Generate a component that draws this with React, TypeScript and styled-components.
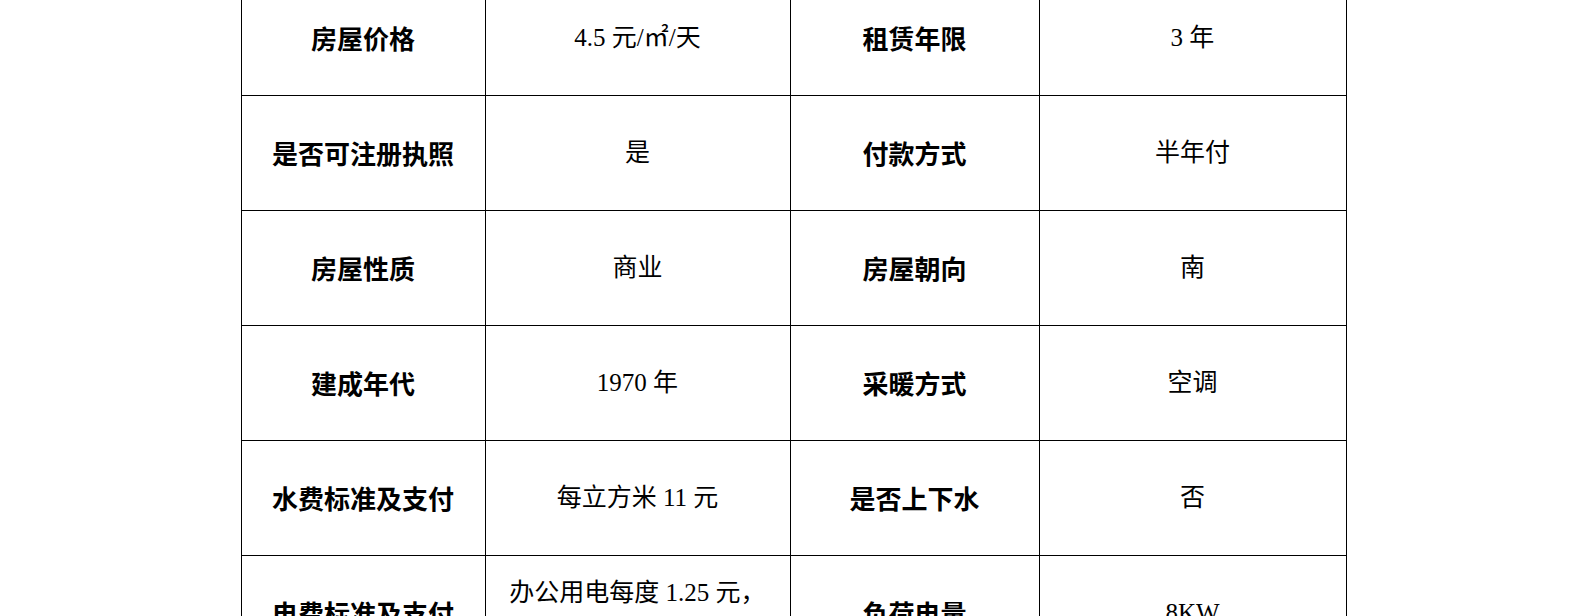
import React from "react";
import styled, { createGlobalStyle } from "styled-components";

const GlobalStyle = createGlobalStyle`
	html, body {
		margin: 0;
		padding: 0;
		background: #ffffff;
		overflow: hidden;
	}
`;

const Page = styled.div`
	width: 1587px;
	height: 616px;
	overflow: hidden;
	background: #ffffff;
`;

const Sheet = styled.div`
	display: grid;
	grid-template-columns: 244px 305px 249px 307px;
	grid-auto-rows: 115px;
	width: 1106px;
	margin: -20px auto 0;
	border-top: 1px solid #000;
	border-left: 1px solid #000;
	box-sizing: border-box;
`;

const Cell = styled.div<{ $label?: boolean }>`
	display: flex;
	align-items: center;
	justify-content: center;
	text-align: center;
	box-sizing: border-box;
	border-right: 1px solid #000;
	border-bottom: 1px solid #000;
	padding: 0 8px;
	color: #000;
	font-family: ${(p) =>
		p.$label
			? `"Noto Sans CJK SC", sans-serif`
			: `"Liberation Serif", "Noto Sans CJK SC", serif`};
	font-weight: ${(p) => (p.$label ? 700 : 400)};
	font-size: ${(p) => (p.$label ? "26px" : "25px")};
	line-height: 40px;
`;

type Row = [string, React.ReactNode, string, React.ReactNode];

const rows: Row[] = [
	["房屋价格", "4.5 元/㎡/天", "租赁年限", "3 年"],
	["是否可注册执照", "是", "付款方式", "半年付"],
	["房屋性质", "商业", "房屋朝向", "南"],
	["建成年代", "1970 年", "采暖方式", "空调"],
	["水费标准及支付", "每立方米 11 元", "是否上下水", "否"],
	[
		"电费标准及支付",
		<>
			办公用电每度 1.25 元，
			<br />
			按月支付
		</>,
		"负荷电量",
		"8KW",
	],
];

export default function App() {
	return (
		<Page>
			<GlobalStyle />
			<Sheet>
				{rows.map((r, i) => (
					<React.Fragment key={i}>
						<Cell $label>{r[0]}</Cell>
						<Cell>{r[1]}</Cell>
						<Cell $label>{r[2]}</Cell>
						<Cell>{r[3]}</Cell>
					</React.Fragment>
				))}
			</Sheet>
		</Page>
	);
}
